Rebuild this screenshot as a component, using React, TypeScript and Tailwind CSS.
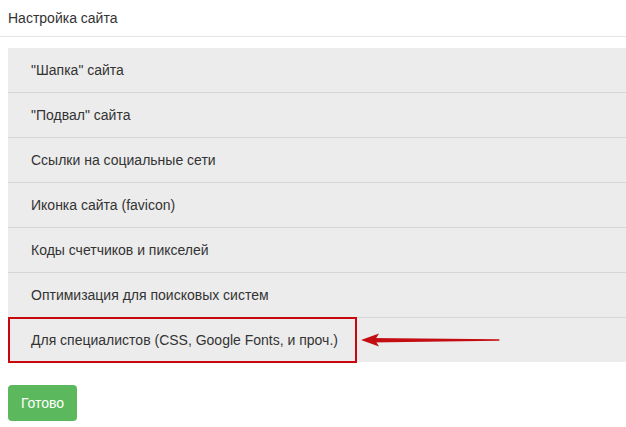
import React from "react";

const items = [
  "\"Шапка\" сайта",
  "\"Подвал\" сайта",
  "Ссылки на социальные сети",
  "Иконка сайта (favicon)",
  "Коды счетчиков и пикселей",
  "Оптимизация для поисковых систем",
  "Для специалистов (CSS, Google Fonts, и проч.)",
];

const App: React.FC = () => {
  return (
    <div
      className="h-[427px] w-[626px] overflow-hidden bg-white text-[14px] text-[#333]"
      style={{ fontFamily: '"Liberation Sans", Arial, sans-serif' }}
    >
      <div className="flex h-[37px] items-center border-b border-[#e5e5e5] px-2">
        Настройка сайта
      </div>

      <div className="ml-2 mt-[11px] bg-[#ececec]">
        {items.map((item, i) => (
          <div
            key={i}
            className={
              i === 0
                ? "flex h-[44px] items-center pl-[23px]"
                : "relative flex h-[45px] items-center border-t border-[#d6d6d6] pl-[23px]"
            }
          >
            {item}
            {i === items.length - 1 && (
              <>
                <div className="absolute left-0 top-[-1px] h-[46px] w-[349px] border-2 border-[#c9080e]" />
                <svg
                  className="absolute left-[353px] top-[14px]"
                  width="140"
                  height="16"
                  viewBox="0 0 140 16"
                >
                  <path d="M9 6 L138 7.2 Q139.5 8 138 8.8 L9 10.5 Z" fill="#c40d12" />
                  <path d="M0 8 L18 1.5 L14 8 L18 14.5 Z" fill="#c40d12" />
                </svg>
              </>
            )}
          </div>
        ))}
      </div>

      <button className="ml-2 mt-[23px] flex h-[36px] w-[69px] items-center justify-center rounded bg-[#5cb85c] text-[14px] text-white">
        Готово
      </button>
    </div>
  );
};

export default App;
